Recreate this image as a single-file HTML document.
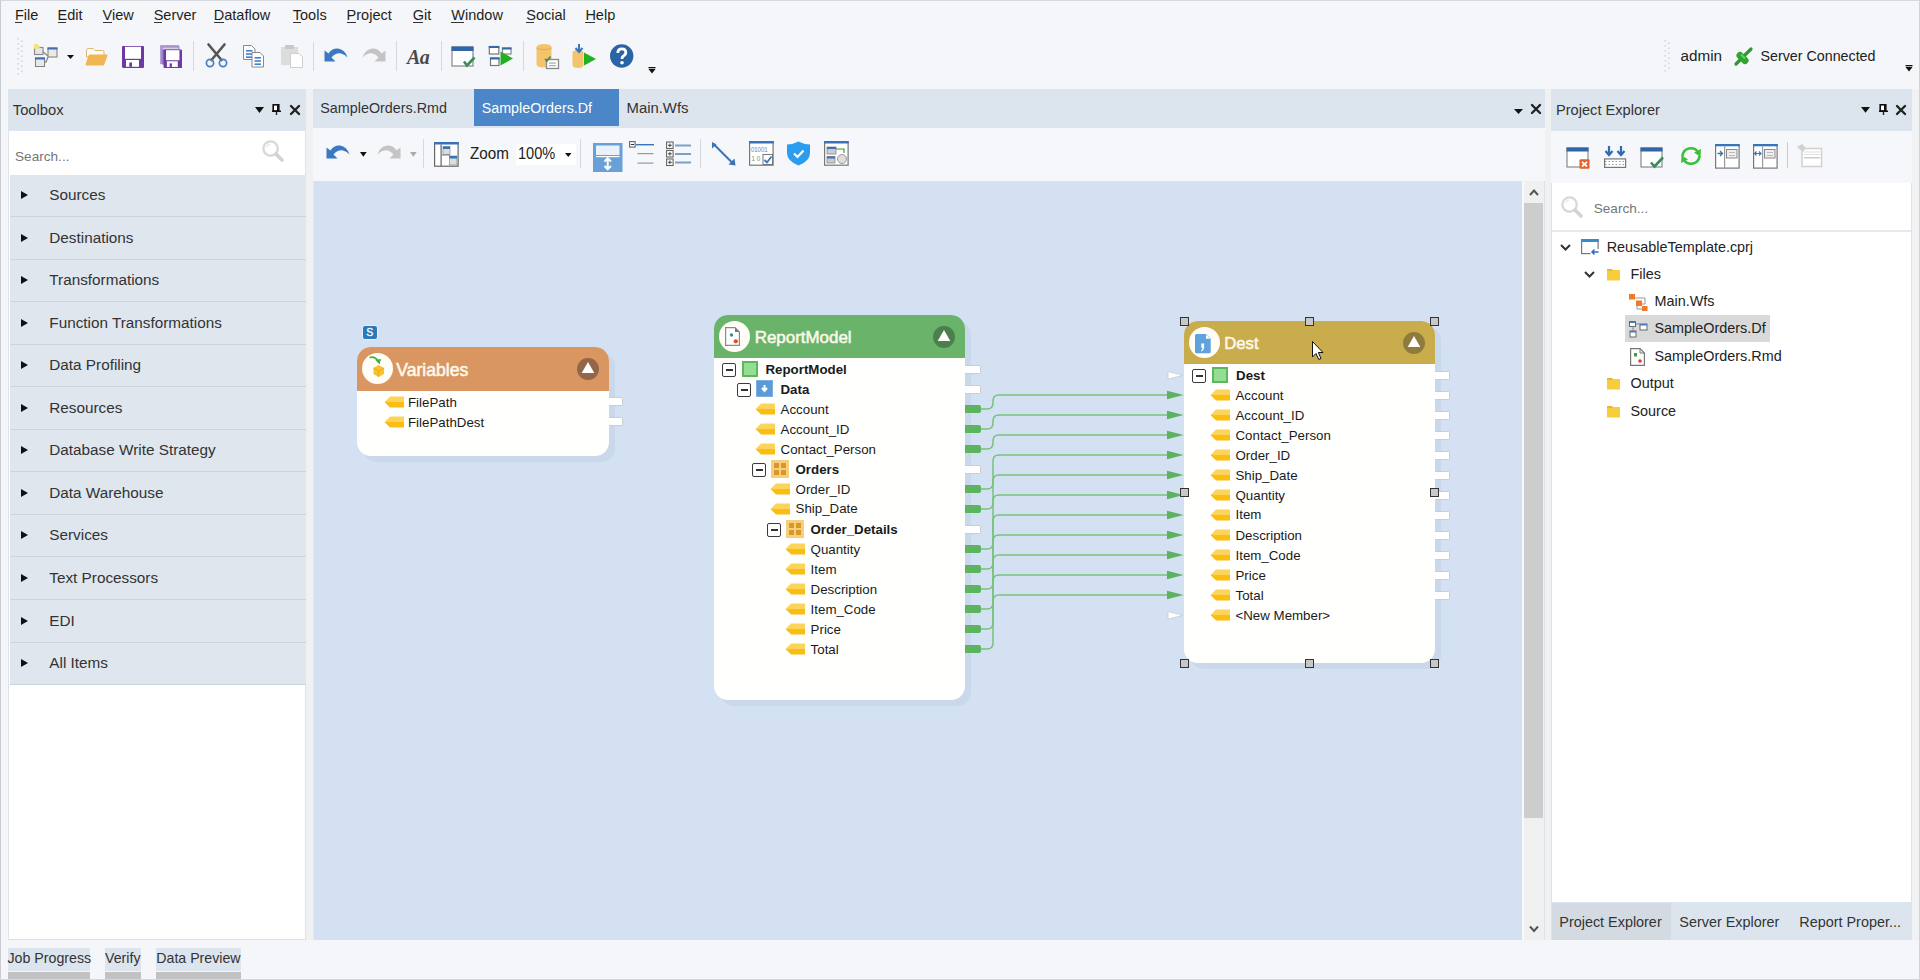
<!DOCTYPE html><html><head><meta charset="utf-8"><style>
*{margin:0;padding:0;box-sizing:border-box}
html,body{width:1920px;height:980px;overflow:hidden;background:#f4f6f9;font-family:"Liberation Sans",sans-serif;color:#222;position:relative}
.a{position:absolute}
.t{position:absolute;white-space:pre;line-height:1}
.hdr{background:#dce5ee}
svg{position:absolute;overflow:visible}
</style></head><body>
<div class="a" style="left:0;top:0;width:1px;height:980px;background:#c9cdd2"></div>
<div class="a" style="left:0;top:0;width:1920px;height:1px;background:#d5d8dc"></div>
<span class="t" style="left:15.00px;top:7.68px;font-size:14.50px;color:#1e1e1e;">File</span>
<div class="a" style="left:15.0px;top:21.5px;width:7px;height:1px;background:#333"></div>
<span class="t" style="left:57.50px;top:7.68px;font-size:14.50px;color:#1e1e1e;">Edit</span>
<div class="a" style="left:57.5px;top:21.5px;width:8px;height:1px;background:#333"></div>
<span class="t" style="left:102.50px;top:7.68px;font-size:14.50px;color:#1e1e1e;">View</span>
<div class="a" style="left:102.5px;top:21.5px;width:9px;height:1px;background:#333"></div>
<span class="t" style="left:153.70px;top:7.68px;font-size:14.50px;color:#1e1e1e;">Server</span>
<div class="a" style="left:153.7px;top:21.5px;width:8px;height:1px;background:#333"></div>
<span class="t" style="left:213.80px;top:7.68px;font-size:14.50px;color:#1e1e1e;">Dataflow</span>
<div class="a" style="left:213.8px;top:21.5px;width:10px;height:1px;background:#333"></div>
<span class="t" style="left:292.80px;top:7.68px;font-size:14.50px;color:#1e1e1e;">Tools</span>
<div class="a" style="left:292.8px;top:21.5px;width:8px;height:1px;background:#333"></div>
<span class="t" style="left:346.60px;top:7.68px;font-size:14.50px;color:#1e1e1e;">Project</span>
<div class="a" style="left:346.6px;top:21.5px;width:9px;height:1px;background:#333"></div>
<span class="t" style="left:412.80px;top:7.68px;font-size:14.50px;color:#1e1e1e;">Git</span>
<div class="a" style="left:412.8px;top:21.5px;width:10px;height:1px;background:#333"></div>
<span class="t" style="left:451.30px;top:7.68px;font-size:14.50px;color:#1e1e1e;">Window</span>
<div class="a" style="left:451.3px;top:21.5px;width:13px;height:1px;background:#333"></div>
<span class="t" style="left:526.30px;top:7.68px;font-size:14.50px;color:#1e1e1e;">Social</span>
<div class="a" style="left:526.3px;top:21.5px;width:8px;height:1px;background:#333"></div>
<span class="t" style="left:585.40px;top:7.68px;font-size:14.50px;color:#1e1e1e;">Help</span>
<div class="a" style="left:585.4px;top:21.5px;width:10px;height:1px;background:#333"></div>
<div class="a hdr" style="left:8px;top:89px;width:298px;height:42px"></div>
<span class="t" style="left:12.80px;top:103.07px;font-size:14.74px;color:#333;">Toolbox</span>
<div class="a" style="left:8px;top:131px;width:298px;height:809px;background:#fff;border-left:1px solid #dfe2e6;border-right:1px solid #dfe2e6;border-bottom:1px solid #dcdfe3"></div>
<div class="a" style="left:306px;top:89px;width:7px;height:851px;background:#eff1f3"></div>
<span class="t" style="left:15.00px;top:149.72px;font-size:13.62px;color:#767676;">Search...</span>
<div class="a" style="left:10px;top:174.50px;width:296px;height:42.55px;background:#dfe6ee;border-bottom:1px solid #cbd3dc"></div>
<div class="a" style="left:21px;top:191.00px;width:0;height:0;border-left:7px solid #111;border-top:4.3px solid transparent;border-bottom:4.3px solid transparent"></div>
<span class="t" style="left:49.30px;top:187.00px;font-size:15.30px;color:#333;">Sources</span>
<div class="a" style="left:10px;top:217.05px;width:296px;height:42.55px;background:#dfe6ee;border-bottom:1px solid #cbd3dc"></div>
<div class="a" style="left:21px;top:233.55px;width:0;height:0;border-left:7px solid #111;border-top:4.3px solid transparent;border-bottom:4.3px solid transparent"></div>
<span class="t" style="left:49.30px;top:229.55px;font-size:15.30px;color:#333;">Destinations</span>
<div class="a" style="left:10px;top:259.60px;width:296px;height:42.55px;background:#dfe6ee;border-bottom:1px solid #cbd3dc"></div>
<div class="a" style="left:21px;top:276.10px;width:0;height:0;border-left:7px solid #111;border-top:4.3px solid transparent;border-bottom:4.3px solid transparent"></div>
<span class="t" style="left:49.30px;top:272.10px;font-size:15.30px;color:#333;">Transformations</span>
<div class="a" style="left:10px;top:302.15px;width:296px;height:42.55px;background:#dfe6ee;border-bottom:1px solid #cbd3dc"></div>
<div class="a" style="left:21px;top:318.65px;width:0;height:0;border-left:7px solid #111;border-top:4.3px solid transparent;border-bottom:4.3px solid transparent"></div>
<span class="t" style="left:49.30px;top:314.64px;font-size:15.30px;color:#333;">Function Transformations</span>
<div class="a" style="left:10px;top:344.70px;width:296px;height:42.55px;background:#dfe6ee;border-bottom:1px solid #cbd3dc"></div>
<div class="a" style="left:21px;top:361.20px;width:0;height:0;border-left:7px solid #111;border-top:4.3px solid transparent;border-bottom:4.3px solid transparent"></div>
<span class="t" style="left:49.30px;top:357.19px;font-size:15.30px;color:#333;">Data Profiling</span>
<div class="a" style="left:10px;top:387.25px;width:296px;height:42.55px;background:#dfe6ee;border-bottom:1px solid #cbd3dc"></div>
<div class="a" style="left:21px;top:403.75px;width:0;height:0;border-left:7px solid #111;border-top:4.3px solid transparent;border-bottom:4.3px solid transparent"></div>
<span class="t" style="left:49.30px;top:399.75px;font-size:15.30px;color:#333;">Resources</span>
<div class="a" style="left:10px;top:429.80px;width:296px;height:42.55px;background:#dfe6ee;border-bottom:1px solid #cbd3dc"></div>
<div class="a" style="left:21px;top:446.30px;width:0;height:0;border-left:7px solid #111;border-top:4.3px solid transparent;border-bottom:4.3px solid transparent"></div>
<span class="t" style="left:49.30px;top:442.29px;font-size:15.30px;color:#333;">Database Write Strategy</span>
<div class="a" style="left:10px;top:472.35px;width:296px;height:42.55px;background:#dfe6ee;border-bottom:1px solid #cbd3dc"></div>
<div class="a" style="left:21px;top:488.85px;width:0;height:0;border-left:7px solid #111;border-top:4.3px solid transparent;border-bottom:4.3px solid transparent"></div>
<span class="t" style="left:49.30px;top:484.84px;font-size:15.30px;color:#333;">Data Warehouse</span>
<div class="a" style="left:10px;top:514.90px;width:296px;height:42.55px;background:#dfe6ee;border-bottom:1px solid #cbd3dc"></div>
<div class="a" style="left:21px;top:531.40px;width:0;height:0;border-left:7px solid #111;border-top:4.3px solid transparent;border-bottom:4.3px solid transparent"></div>
<span class="t" style="left:49.30px;top:527.39px;font-size:15.30px;color:#333;">Services</span>
<div class="a" style="left:10px;top:557.45px;width:296px;height:42.55px;background:#dfe6ee;border-bottom:1px solid #cbd3dc"></div>
<div class="a" style="left:21px;top:573.95px;width:0;height:0;border-left:7px solid #111;border-top:4.3px solid transparent;border-bottom:4.3px solid transparent"></div>
<span class="t" style="left:49.30px;top:569.95px;font-size:15.30px;color:#333;">Text Processors</span>
<div class="a" style="left:10px;top:600.00px;width:296px;height:42.55px;background:#dfe6ee;border-bottom:1px solid #cbd3dc"></div>
<div class="a" style="left:21px;top:616.50px;width:0;height:0;border-left:7px solid #111;border-top:4.3px solid transparent;border-bottom:4.3px solid transparent"></div>
<span class="t" style="left:49.30px;top:612.50px;font-size:15.30px;color:#333;">EDI</span>
<div class="a" style="left:10px;top:642.55px;width:296px;height:42.55px;background:#dfe6ee;border-bottom:1px solid #cbd3dc"></div>
<div class="a" style="left:21px;top:659.05px;width:0;height:0;border-left:7px solid #111;border-top:4.3px solid transparent;border-bottom:4.3px solid transparent"></div>
<span class="t" style="left:49.30px;top:655.04px;font-size:15.30px;color:#333;">All Items</span>
<div class="a hdr" style="left:313px;top:89px;width:1232px;height:39px"></div>
<div class="a" style="left:313px;top:128px;width:1232px;height:53px;background:#f5f7fa"></div>
<div class="a" style="left:313px;top:181px;width:1209px;height:759px;background:#d3e1f2;border-left:1px solid #e3e8ee"></div>
<div class="a" style="left:1545px;top:89px;width:6px;height:851px;background:#eff1f3"></div>
<div class="a" style="left:1522px;top:181px;width:23px;height:759px;background:#f0f0f0;border-left:2px solid #f7f9fb;border-right:1px solid #dfe2e5"></div>
<div class="a" style="left:1524px;top:203px;width:18.5px;height:615px;background:#cdcdcd"></div>
<span class="t" style="left:320.30px;top:101.31px;font-size:14.34px;color:#333;">SampleOrders.Rmd</span>
<div class="a" style="left:474px;top:89px;width:145px;height:37px;background:#4b86c8"></div>
<span class="t" style="left:481.75px;top:101.35px;font-size:14.29px;color:#fff;">SampleOrders.Df</span>
<span class="t" style="left:626.50px;top:100.85px;font-size:14.88px;color:#333;">Main.Wfs</span>
<div class="a" style="left:516px;top:144px;width:60px;height:21px;background:#fff"></div>
<span class="t" style="left:470.00px;top:145.68px;font-size:15.20px;color:#222;transform:scaleY(1.1);transform-origin:0 85%;">Zoom</span>
<span class="t" style="left:518.00px;top:146.89px;font-size:14.60px;color:#222;transform:scaleY(1.08);transform-origin:0 85%;">100%</span>
<div class="a hdr" style="left:1551px;top:89px;width:361px;height:42px"></div>
<span class="t" style="left:1556.00px;top:102.57px;font-size:14.62px;color:#333;">Project Explorer</span>
<div class="a" style="left:1551px;top:131px;width:361px;height:52px;background:#f5f7fa"></div>
<div class="a" style="left:1552px;top:183px;width:360px;height:48px;background:#fff"></div>
<div class="a" style="left:1552px;top:230px;width:360px;height:2px;background:#e6e8eb"></div>
<span class="t" style="left:1593.70px;top:202.12px;font-size:13.62px;color:#767676;">Search...</span>
<div class="a" style="left:1551px;top:232px;width:361px;height:670px;background:#fff;border-left:1px solid #dfe2e6;border-right:1px solid #dfe2e6"></div>
<div class="a" style="left:1551px;top:183px;width:1px;height:50px;background:#dfe2e6"></div><div class="a" style="left:1911px;top:183px;width:1px;height:50px;background:#dfe2e6"></div>
<div class="a" style="left:1912px;top:89px;width:7px;height:851px;background:#f0f2f4"></div>
<div class="a hdr" style="left:1551px;top:902px;width:361px;height:38px"></div>
<div class="a" style="left:1552px;top:903px;width:119px;height:37px;background:#d3dae1"></div>
<span class="t" style="left:1559.30px;top:914.76px;font-size:14.40px;color:#333;">Project Explorer</span>
<span class="t" style="left:1679.30px;top:914.76px;font-size:14.40px;color:#333;">Server Explorer</span>
<span class="t" style="left:1799.30px;top:914.76px;font-size:14.40px;color:#333;">Report Proper...</span>
<div class="a" style="left:1625px;top:315px;width:145px;height:27px;background:#d9d9d9"></div>
<span class="t" style="left:1606.70px;top:239.86px;font-size:14.40px;color:#222;">ReusableTemplate.cprj</span>
<span class="t" style="left:1630.50px;top:266.56px;font-size:14.40px;color:#222;">Files</span>
<span class="t" style="left:1654.50px;top:293.76px;font-size:14.40px;color:#222;">Main.Wfs</span>
<span class="t" style="left:1654.50px;top:321.16px;font-size:14.40px;color:#222;">SampleOrders.Df</span>
<span class="t" style="left:1654.50px;top:349.16px;font-size:14.40px;color:#222;">SampleOrders.Rmd</span>
<span class="t" style="left:1630.50px;top:376.06px;font-size:14.40px;color:#222;">Output</span>
<span class="t" style="left:1630.50px;top:404.16px;font-size:14.40px;color:#222;">Source</span>
<span class="t" style="left:1680.50px;top:48.35px;font-size:15.24px;color:#222;">admin</span>
<span class="t" style="left:1760.50px;top:49.17px;font-size:14.27px;color:#222;">Server Connected</span>
<div class="a hdr" style="left:7.5px;top:948px;width:82.0px;height:23.3px"></div>
<div class="a" style="left:7.5px;top:972px;width:82.0px;height:6.5px;background:#c2c2c2"></div>
<span class="t" style="left:7.50px;top:950.93px;font-size:14.20px;color:#333;">Job Progress</span>
<div class="a hdr" style="left:105.0px;top:948px;width:36.2px;height:23.3px"></div>
<div class="a" style="left:105.0px;top:972px;width:36.2px;height:6.5px;background:#c2c2c2"></div>
<span class="t" style="left:105.00px;top:950.93px;font-size:14.20px;color:#333;">Verify</span>
<div class="a hdr" style="left:156.2px;top:948px;width:85.0px;height:23.3px"></div>
<div class="a" style="left:156.2px;top:972px;width:85.0px;height:6.5px;background:#c2c2c2"></div>
<span class="t" style="left:156.25px;top:950.93px;font-size:14.20px;color:#333;">Data Preview</span>
<div class="a" style="left:0;top:979px;width:1920px;height:1px;background:#d3d6da"></div>
<svg style="left:0;top:0" width="1920" height="980"><path d="M981,409 H987 Q993,409 993,403 V401 Q993,395 999,395 H1170" stroke="#78c27a" stroke-width="1.5" fill="none"/><path d="M981,429 H987 Q993,429 993,423 V421 Q993,415 999,415 H1170" stroke="#78c27a" stroke-width="1.5" fill="none"/><path d="M981,449 H987 Q993,449 993,443 V441 Q993,435 999,435 H1170" stroke="#78c27a" stroke-width="1.5" fill="none"/><path d="M981,489 H987 Q993,489 993,483 V461 Q993,455 999,455 H1170" stroke="#78c27a" stroke-width="1.5" fill="none"/><path d="M981,509 H987 Q993,509 993,503 V481 Q993,475 999,475 H1170" stroke="#78c27a" stroke-width="1.5" fill="none"/><path d="M981,549 H987 Q993,549 993,543 V501 Q993,495 999,495 H1170" stroke="#78c27a" stroke-width="1.5" fill="none"/><path d="M981,569 H987 Q993,569 993,563 V521 Q993,515 999,515 H1170" stroke="#78c27a" stroke-width="1.5" fill="none"/><path d="M981,589 H987 Q993,589 993,583 V541 Q993,535 999,535 H1170" stroke="#78c27a" stroke-width="1.5" fill="none"/><path d="M981,609 H987 Q993,609 993,603 V561 Q993,555 999,555 H1170" stroke="#78c27a" stroke-width="1.5" fill="none"/><path d="M981,629 H987 Q993,629 993,623 V581 Q993,575 999,575 H1170" stroke="#78c27a" stroke-width="1.5" fill="none"/><path d="M981,649 H987 Q993,649 993,643 V601 Q993,595 999,595 H1170" stroke="#78c27a" stroke-width="1.5" fill="none"/><path d="M1167,390.7 L1183.5,395 L1167,399.3 Z" fill="#5cb25e"/><path d="M1167,410.7 L1183.5,415 L1167,419.3 Z" fill="#5cb25e"/><path d="M1167,430.7 L1183.5,435 L1167,439.3 Z" fill="#5cb25e"/><path d="M1167,450.7 L1183.5,455 L1167,459.3 Z" fill="#5cb25e"/><path d="M1167,470.7 L1183.5,475 L1167,479.3 Z" fill="#5cb25e"/><path d="M1167,490.7 L1183.5,495 L1167,499.3 Z" fill="#5cb25e"/><path d="M1167,510.7 L1183.5,515 L1167,519.3 Z" fill="#5cb25e"/><path d="M1167,530.7 L1183.5,535 L1167,539.3 Z" fill="#5cb25e"/><path d="M1167,550.7 L1183.5,555 L1167,559.3 Z" fill="#5cb25e"/><path d="M1167,570.7 L1183.5,575 L1167,579.3 Z" fill="#5cb25e"/><path d="M1167,590.7 L1183.5,595 L1167,599.3 Z" fill="#5cb25e"/><path d="M1168,371.5 L1183,375.3 L1168,379.1 Z" fill="#fff" stroke="#c8ccd0" stroke-width="0.8"/><path d="M1168,611.5 L1183,615.3 L1168,619.0999999999999 Z" fill="#fff" stroke="#c8ccd0" stroke-width="0.8"/></svg>
<div class="a" style="left:362px;top:325px;width:16px;height:15px;border-radius:3px;background:#2b79b9;border:1px solid #e8f0f8"></div>
<span class="t" style="left:366.30px;top:328.08px;font-size:10.49px;color:#fff;-webkit-text-stroke:0.3px #fff;">S</span>
<div class="a" style="left:363px;top:353px;width:251.5px;height:109px;border-radius:14px;background:#c9d8ea"></div>
<div class="a" style="left:357px;top:347px;width:251.5px;height:109px;border-radius:14px;background:#fffffd;overflow:hidden"><div class="a" style="left:0;top:0;width:251.5px;height:43.5px;background:#da9660"></div></div>
<div class="a" style="left:362.0px;top:353.25px;width:31px;height:31px;border-radius:50%;background:#fffdf6"></div>
<svg style="left:576.5px;top:357.75px" width="22" height="22"><circle cx="11" cy="11" r="11" fill="#93664a"/><path d="M11,4 L17.3,15 H4.7 Z" fill="#fff"/></svg>
<span class="t" style="left:396.30px;top:361.85px;font-size:17.58px;color:#fdf8ea;-webkit-text-stroke:0.55px #fdf8ea;">Variables</span>
<svg style="left:383.6px;top:395.5px" width="20" height="12" viewBox="0 0 20 12"><path d="M0.5,6 L6,0.5 H20 V6 Z" fill="#fdd45a"/><path d="M0.5,6 L6,11.5 H20 V6 Z" fill="#fbbd12"/></svg>
<span class="t" style="left:408.00px;top:395.69px;font-size:13.30px;color:#1a1a1a;">FilePath</span>
<div class="a" style="left:609px;top:396.5px;width:14px;height:9px;background:#fff;border:1px solid #c9ced3;border-left:none;border-radius:0 2px 2px 0"></div>
<svg style="left:383.6px;top:415.5px" width="20" height="12" viewBox="0 0 20 12"><path d="M0.5,6 L6,0.5 H20 V6 Z" fill="#fdd45a"/><path d="M0.5,6 L6,11.5 H20 V6 Z" fill="#fbbd12"/></svg>
<span class="t" style="left:408.00px;top:415.69px;font-size:13.30px;color:#1a1a1a;">FilePathDest</span>
<div class="a" style="left:609px;top:416.5px;width:14px;height:9px;background:#fff;border:1px solid #c9ced3;border-left:none;border-radius:0 2px 2px 0"></div>
<div class="a" style="left:720px;top:321px;width:251px;height:385px;border-radius:14px;background:#c9d8ea"></div>
<div class="a" style="left:714px;top:315px;width:251px;height:385px;border-radius:14px;background:#fffffd;overflow:hidden"><div class="a" style="left:0;top:0;width:251px;height:43.19999999999999px;background:#69b36b"></div></div>
<div class="a" style="left:719.0px;top:321.1px;width:31px;height:31px;border-radius:50%;background:#fffdf6"></div>
<svg style="left:933px;top:325.6px" width="22" height="22"><circle cx="11" cy="11" r="11" fill="#4b804c"/><path d="M11,4 L17.3,15 H4.7 Z" fill="#fff"/></svg>
<span class="t" style="left:754.70px;top:329.81px;font-size:16.93px;color:#fdf8ea;-webkit-text-stroke:0.55px #fdf8ea;">ReportModel</span>
<div class="a" style="left:722px;top:362.8px;width:14px;height:14px;border:1.6px solid #3a3a3a;border-radius:2px;background:#fff"></div><div class="a" style="left:725.5px;top:369.0px;width:7px;height:1.6px;background:#333"></div>
<div class="a" style="left:741.5px;top:360.8px;width:16px;height:16px;background:#95dc95;border:2.5px solid #5cb85c"></div>
<span class="t" style="left:765.50px;top:362.50px;font-size:13.30px;color:#1a1a1a;font-weight:700;">ReportModel</span>
<div class="a" style="left:965px;top:364.7px;width:16px;height:9px;background:#fff;border:1px solid #c9ced3;border-left:none;border-radius:0 2px 2px 0"></div>
<div class="a" style="left:737px;top:382.8px;width:14px;height:14px;border:1.6px solid #3a3a3a;border-radius:2px;background:#fff"></div><div class="a" style="left:740.5px;top:389.0px;width:7px;height:1.6px;background:#333"></div>
<div class="a" style="left:756px;top:380.3px;width:17px;height:17px;background:#5b9ad8;border:1.5px solid #7fb0e0"></div><svg style="left:756px;top:380.3px" width="17" height="17"><path d="M8.5,5 V10 M6,8 L8.5,11 L11,8" stroke="#fff" stroke-width="2" fill="none"/></svg>
<span class="t" style="left:780.50px;top:382.50px;font-size:13.30px;color:#1a1a1a;font-weight:700;">Data</span>
<div class="a" style="left:965px;top:384.7px;width:16px;height:9px;background:#fff;border:1px solid #c9ced3;border-left:none;border-radius:0 2px 2px 0"></div>
<svg style="left:755.3px;top:403.3px" width="20" height="12" viewBox="0 0 20 12"><path d="M0.5,6 L6,0.5 H20 V6 Z" fill="#fdd45a"/><path d="M0.5,6 L6,11.5 H20 V6 Z" fill="#fbbd12"/></svg>
<span class="t" style="left:780.60px;top:402.50px;font-size:13.30px;color:#1a1a1a;">Account</span>
<div class="a" style="left:965px;top:404.9px;width:16px;height:8.6px;background:#5db45e;border-radius:0 2px 2px 0"></div>
<svg style="left:755.3px;top:423.3px" width="20" height="12" viewBox="0 0 20 12"><path d="M0.5,6 L6,0.5 H20 V6 Z" fill="#fdd45a"/><path d="M0.5,6 L6,11.5 H20 V6 Z" fill="#fbbd12"/></svg>
<span class="t" style="left:780.60px;top:422.50px;font-size:13.30px;color:#1a1a1a;">Account_ID</span>
<div class="a" style="left:965px;top:424.9px;width:16px;height:8.6px;background:#5db45e;border-radius:0 2px 2px 0"></div>
<svg style="left:755.3px;top:443.3px" width="20" height="12" viewBox="0 0 20 12"><path d="M0.5,6 L6,0.5 H20 V6 Z" fill="#fdd45a"/><path d="M0.5,6 L6,11.5 H20 V6 Z" fill="#fbbd12"/></svg>
<span class="t" style="left:780.60px;top:442.50px;font-size:13.30px;color:#1a1a1a;">Contact_Person</span>
<div class="a" style="left:965px;top:444.9px;width:16px;height:8.6px;background:#5db45e;border-radius:0 2px 2px 0"></div>
<div class="a" style="left:752px;top:462.8px;width:14px;height:14px;border:1.6px solid #3a3a3a;border-radius:2px;background:#fff"></div><div class="a" style="left:755.5px;top:469.0px;width:7px;height:1.6px;background:#333"></div>
<div class="a" style="left:771px;top:459.8px;width:18px;height:18px;background:#f6cf7a"></div><div class="a" style="left:774px;top:462.8px;width:5px;height:5px;background:#d9962a"></div><div class="a" style="left:781px;top:462.8px;width:5px;height:5px;background:#d9962a"></div><div class="a" style="left:774px;top:469.8px;width:5px;height:5px;background:#d9962a"></div><div class="a" style="left:781px;top:469.8px;width:5px;height:5px;background:#d9962a"></div>
<span class="t" style="left:795.50px;top:462.50px;font-size:13.30px;color:#1a1a1a;font-weight:700;">Orders</span>
<div class="a" style="left:965px;top:464.7px;width:16px;height:9px;background:#fff;border:1px solid #c9ced3;border-left:none;border-radius:0 2px 2px 0"></div>
<svg style="left:770.3px;top:483.3px" width="20" height="12" viewBox="0 0 20 12"><path d="M0.5,6 L6,0.5 H20 V6 Z" fill="#fdd45a"/><path d="M0.5,6 L6,11.5 H20 V6 Z" fill="#fbbd12"/></svg>
<span class="t" style="left:795.60px;top:482.50px;font-size:13.30px;color:#1a1a1a;">Order_ID</span>
<div class="a" style="left:965px;top:484.9px;width:16px;height:8.6px;background:#5db45e;border-radius:0 2px 2px 0"></div>
<svg style="left:770.3px;top:503.29999999999995px" width="20" height="12" viewBox="0 0 20 12"><path d="M0.5,6 L6,0.5 H20 V6 Z" fill="#fdd45a"/><path d="M0.5,6 L6,11.5 H20 V6 Z" fill="#fbbd12"/></svg>
<span class="t" style="left:795.60px;top:502.49px;font-size:13.30px;color:#1a1a1a;">Ship_Date</span>
<div class="a" style="left:965px;top:504.9px;width:16px;height:8.6px;background:#5db45e;border-radius:0 2px 2px 0"></div>
<div class="a" style="left:767px;top:522.8px;width:14px;height:14px;border:1.6px solid #3a3a3a;border-radius:2px;background:#fff"></div><div class="a" style="left:770.5px;top:529.0px;width:7px;height:1.6px;background:#333"></div>
<div class="a" style="left:786px;top:519.8px;width:18px;height:18px;background:#f6cf7a"></div><div class="a" style="left:789px;top:522.8px;width:5px;height:5px;background:#d9962a"></div><div class="a" style="left:796px;top:522.8px;width:5px;height:5px;background:#d9962a"></div><div class="a" style="left:789px;top:529.8px;width:5px;height:5px;background:#d9962a"></div><div class="a" style="left:796px;top:529.8px;width:5px;height:5px;background:#d9962a"></div>
<span class="t" style="left:810.50px;top:522.50px;font-size:13.30px;color:#1a1a1a;font-weight:700;">Order_Details</span>
<div class="a" style="left:965px;top:524.7px;width:16px;height:9px;background:#fff;border:1px solid #c9ced3;border-left:none;border-radius:0 2px 2px 0"></div>
<svg style="left:785.3px;top:543.3px" width="20" height="12" viewBox="0 0 20 12"><path d="M0.5,6 L6,0.5 H20 V6 Z" fill="#fdd45a"/><path d="M0.5,6 L6,11.5 H20 V6 Z" fill="#fbbd12"/></svg>
<span class="t" style="left:810.60px;top:542.50px;font-size:13.30px;color:#1a1a1a;">Quantity</span>
<div class="a" style="left:965px;top:544.9px;width:16px;height:8.6px;background:#5db45e;border-radius:0 2px 2px 0"></div>
<svg style="left:785.3px;top:563.3px" width="20" height="12" viewBox="0 0 20 12"><path d="M0.5,6 L6,0.5 H20 V6 Z" fill="#fdd45a"/><path d="M0.5,6 L6,11.5 H20 V6 Z" fill="#fbbd12"/></svg>
<span class="t" style="left:810.60px;top:562.50px;font-size:13.30px;color:#1a1a1a;">Item</span>
<div class="a" style="left:965px;top:564.9px;width:16px;height:8.6px;background:#5db45e;border-radius:0 2px 2px 0"></div>
<svg style="left:785.3px;top:583.3px" width="20" height="12" viewBox="0 0 20 12"><path d="M0.5,6 L6,0.5 H20 V6 Z" fill="#fdd45a"/><path d="M0.5,6 L6,11.5 H20 V6 Z" fill="#fbbd12"/></svg>
<span class="t" style="left:810.60px;top:582.50px;font-size:13.30px;color:#1a1a1a;">Description</span>
<div class="a" style="left:965px;top:584.9px;width:16px;height:8.6px;background:#5db45e;border-radius:0 2px 2px 0"></div>
<svg style="left:785.3px;top:603.3px" width="20" height="12" viewBox="0 0 20 12"><path d="M0.5,6 L6,0.5 H20 V6 Z" fill="#fdd45a"/><path d="M0.5,6 L6,11.5 H20 V6 Z" fill="#fbbd12"/></svg>
<span class="t" style="left:810.60px;top:602.50px;font-size:13.30px;color:#1a1a1a;">Item_Code</span>
<div class="a" style="left:965px;top:604.9px;width:16px;height:8.6px;background:#5db45e;border-radius:0 2px 2px 0"></div>
<svg style="left:785.3px;top:623.3px" width="20" height="12" viewBox="0 0 20 12"><path d="M0.5,6 L6,0.5 H20 V6 Z" fill="#fdd45a"/><path d="M0.5,6 L6,11.5 H20 V6 Z" fill="#fbbd12"/></svg>
<span class="t" style="left:810.60px;top:622.50px;font-size:13.30px;color:#1a1a1a;">Price</span>
<div class="a" style="left:965px;top:624.9px;width:16px;height:8.6px;background:#5db45e;border-radius:0 2px 2px 0"></div>
<svg style="left:785.3px;top:643.3px" width="20" height="12" viewBox="0 0 20 12"><path d="M0.5,6 L6,0.5 H20 V6 Z" fill="#fdd45a"/><path d="M0.5,6 L6,11.5 H20 V6 Z" fill="#fbbd12"/></svg>
<span class="t" style="left:810.60px;top:642.50px;font-size:13.30px;color:#1a1a1a;">Total</span>
<div class="a" style="left:965px;top:644.9px;width:16px;height:8.6px;background:#5db45e;border-radius:0 2px 2px 0"></div>
<div class="a" style="left:1190px;top:327px;width:251px;height:342.4px;border-radius:14px;background:#c9d8ea"></div>
<div class="a" style="left:1184px;top:321px;width:251px;height:342.4px;border-radius:14px;background:#fffffd;overflow:hidden"><div class="a" style="left:0;top:0;width:251px;height:43.30000000000001px;background:#c9ac4c"></div></div>
<div class="a" style="left:1189.0px;top:327.15px;width:31px;height:31px;border-radius:50%;background:#fffdf6"></div>
<svg style="left:1403px;top:331.65px" width="22" height="22"><circle cx="11" cy="11" r="11" fill="#8f7c3c"/><path d="M11,4 L17.3,15 H4.7 Z" fill="#fff"/></svg>
<span class="t" style="left:1224.30px;top:336.22px;font-size:16.68px;color:#fdf8ea;-webkit-text-stroke:0.55px #fdf8ea;">Dest</span>
<div class="a" style="left:1192.2px;top:368.8px;width:14px;height:14px;border:1.6px solid #3a3a3a;border-radius:2px;background:#fff"></div><div class="a" style="left:1195.7px;top:375.0px;width:7px;height:1.6px;background:#333"></div>
<div class="a" style="left:1212px;top:366.8px;width:16px;height:16px;background:#95dc95;border:2.5px solid #5cb85c"></div>
<span class="t" style="left:1236.10px;top:368.50px;font-size:13.30px;color:#1a1a1a;font-weight:700;">Dest</span>
<div class="a" style="left:1435px;top:370.8px;width:15px;height:9px;background:#fff;border:1px solid #c9ced3;border-left:none;border-radius:0 2px 2px 0"></div>
<svg style="left:1210.2px;top:389.3px" width="20" height="12" viewBox="0 0 20 12"><path d="M0.5,6 L6,0.5 H20 V6 Z" fill="#fdd45a"/><path d="M0.5,6 L6,11.5 H20 V6 Z" fill="#fbbd12"/></svg>
<span class="t" style="left:1235.50px;top:388.50px;font-size:13.30px;color:#1a1a1a;">Account</span>
<div class="a" style="left:1435px;top:390.8px;width:15px;height:9px;background:#fff;border:1px solid #c9ced3;border-left:none;border-radius:0 2px 2px 0"></div>
<svg style="left:1210.2px;top:409.3px" width="20" height="12" viewBox="0 0 20 12"><path d="M0.5,6 L6,0.5 H20 V6 Z" fill="#fdd45a"/><path d="M0.5,6 L6,11.5 H20 V6 Z" fill="#fbbd12"/></svg>
<span class="t" style="left:1235.50px;top:408.50px;font-size:13.30px;color:#1a1a1a;">Account_ID</span>
<div class="a" style="left:1435px;top:410.8px;width:15px;height:9px;background:#fff;border:1px solid #c9ced3;border-left:none;border-radius:0 2px 2px 0"></div>
<svg style="left:1210.2px;top:429.3px" width="20" height="12" viewBox="0 0 20 12"><path d="M0.5,6 L6,0.5 H20 V6 Z" fill="#fdd45a"/><path d="M0.5,6 L6,11.5 H20 V6 Z" fill="#fbbd12"/></svg>
<span class="t" style="left:1235.50px;top:428.50px;font-size:13.30px;color:#1a1a1a;">Contact_Person</span>
<div class="a" style="left:1435px;top:430.8px;width:15px;height:9px;background:#fff;border:1px solid #c9ced3;border-left:none;border-radius:0 2px 2px 0"></div>
<svg style="left:1210.2px;top:449.3px" width="20" height="12" viewBox="0 0 20 12"><path d="M0.5,6 L6,0.5 H20 V6 Z" fill="#fdd45a"/><path d="M0.5,6 L6,11.5 H20 V6 Z" fill="#fbbd12"/></svg>
<span class="t" style="left:1235.50px;top:448.50px;font-size:13.30px;color:#1a1a1a;">Order_ID</span>
<div class="a" style="left:1435px;top:450.8px;width:15px;height:9px;background:#fff;border:1px solid #c9ced3;border-left:none;border-radius:0 2px 2px 0"></div>
<svg style="left:1210.2px;top:469.3px" width="20" height="12" viewBox="0 0 20 12"><path d="M0.5,6 L6,0.5 H20 V6 Z" fill="#fdd45a"/><path d="M0.5,6 L6,11.5 H20 V6 Z" fill="#fbbd12"/></svg>
<span class="t" style="left:1235.50px;top:468.50px;font-size:13.30px;color:#1a1a1a;">Ship_Date</span>
<div class="a" style="left:1435px;top:470.8px;width:15px;height:9px;background:#fff;border:1px solid #c9ced3;border-left:none;border-radius:0 2px 2px 0"></div>
<svg style="left:1210.2px;top:489.3px" width="20" height="12" viewBox="0 0 20 12"><path d="M0.5,6 L6,0.5 H20 V6 Z" fill="#fdd45a"/><path d="M0.5,6 L6,11.5 H20 V6 Z" fill="#fbbd12"/></svg>
<span class="t" style="left:1235.50px;top:488.50px;font-size:13.30px;color:#1a1a1a;">Quantity</span>
<div class="a" style="left:1435px;top:490.8px;width:15px;height:9px;background:#fff;border:1px solid #c9ced3;border-left:none;border-radius:0 2px 2px 0"></div>
<svg style="left:1210.2px;top:509.29999999999995px" width="20" height="12" viewBox="0 0 20 12"><path d="M0.5,6 L6,0.5 H20 V6 Z" fill="#fdd45a"/><path d="M0.5,6 L6,11.5 H20 V6 Z" fill="#fbbd12"/></svg>
<span class="t" style="left:1235.50px;top:508.49px;font-size:13.30px;color:#1a1a1a;">Item</span>
<div class="a" style="left:1435px;top:510.8px;width:15px;height:9px;background:#fff;border:1px solid #c9ced3;border-left:none;border-radius:0 2px 2px 0"></div>
<svg style="left:1210.2px;top:529.3px" width="20" height="12" viewBox="0 0 20 12"><path d="M0.5,6 L6,0.5 H20 V6 Z" fill="#fdd45a"/><path d="M0.5,6 L6,11.5 H20 V6 Z" fill="#fbbd12"/></svg>
<span class="t" style="left:1235.50px;top:528.50px;font-size:13.30px;color:#1a1a1a;">Description</span>
<div class="a" style="left:1435px;top:530.8px;width:15px;height:9px;background:#fff;border:1px solid #c9ced3;border-left:none;border-radius:0 2px 2px 0"></div>
<svg style="left:1210.2px;top:549.3px" width="20" height="12" viewBox="0 0 20 12"><path d="M0.5,6 L6,0.5 H20 V6 Z" fill="#fdd45a"/><path d="M0.5,6 L6,11.5 H20 V6 Z" fill="#fbbd12"/></svg>
<span class="t" style="left:1235.50px;top:548.50px;font-size:13.30px;color:#1a1a1a;">Item_Code</span>
<div class="a" style="left:1435px;top:550.8px;width:15px;height:9px;background:#fff;border:1px solid #c9ced3;border-left:none;border-radius:0 2px 2px 0"></div>
<svg style="left:1210.2px;top:569.3px" width="20" height="12" viewBox="0 0 20 12"><path d="M0.5,6 L6,0.5 H20 V6 Z" fill="#fdd45a"/><path d="M0.5,6 L6,11.5 H20 V6 Z" fill="#fbbd12"/></svg>
<span class="t" style="left:1235.50px;top:568.50px;font-size:13.30px;color:#1a1a1a;">Price</span>
<div class="a" style="left:1435px;top:570.8px;width:15px;height:9px;background:#fff;border:1px solid #c9ced3;border-left:none;border-radius:0 2px 2px 0"></div>
<svg style="left:1210.2px;top:589.3px" width="20" height="12" viewBox="0 0 20 12"><path d="M0.5,6 L6,0.5 H20 V6 Z" fill="#fdd45a"/><path d="M0.5,6 L6,11.5 H20 V6 Z" fill="#fbbd12"/></svg>
<span class="t" style="left:1235.50px;top:588.50px;font-size:13.30px;color:#1a1a1a;">Total</span>
<div class="a" style="left:1435px;top:590.8px;width:15px;height:9px;background:#fff;border:1px solid #c9ced3;border-left:none;border-radius:0 2px 2px 0"></div>
<svg style="left:1210.2px;top:609.3px" width="20" height="12" viewBox="0 0 20 12"><path d="M0.5,6 L6,0.5 H20 V6 Z" fill="#fdd45a"/><path d="M0.5,6 L6,11.5 H20 V6 Z" fill="#fbbd12"/></svg>
<span class="t" style="left:1235.50px;top:608.50px;font-size:13.30px;color:#1a1a1a;">&lt;New Member&gt;</span>
<div class="a" style="left:1179.5px;top:317.0px;width:9px;height:9px;background:#c8c8c8;border:1.5px solid #333"></div>
<div class="a" style="left:1179.5px;top:658.5px;width:9px;height:9px;background:#c8c8c8;border:1.5px solid #333"></div>
<div class="a" style="left:1304.5px;top:317.0px;width:9px;height:9px;background:#c8c8c8;border:1.5px solid #333"></div>
<div class="a" style="left:1304.5px;top:658.5px;width:9px;height:9px;background:#c8c8c8;border:1.5px solid #333"></div>
<div class="a" style="left:1429.5px;top:317.0px;width:9px;height:9px;background:#c8c8c8;border:1.5px solid #333"></div>
<div class="a" style="left:1429.5px;top:658.5px;width:9px;height:9px;background:#c8c8c8;border:1.5px solid #333"></div>
<div class="a" style="left:1179.5px;top:488px;width:9px;height:9px;background:#c8c8c8;border:1.5px solid #333"></div>
<div class="a" style="left:1429.5px;top:488px;width:9px;height:9px;background:#c8c8c8;border:1.5px solid #333"></div>
<svg style="left:1312px;top:341px" width="14" height="20"><path d="M0.5,0.5 V16 L4,12.5 L6.8,18.5 L9,17.5 L6.3,11.5 H11 Z" fill="#fff" stroke="#111" stroke-width="1"/></svg>
<svg style="left:16px;top:38px" width="8" height="36" viewBox="0 0 8 36"><rect x="1.5" y="0" width="1.6" height="1.6" fill="#d3d6da"/><rect x="5" y="2.5" width="1.6" height="1.6" fill="#d3d6da"/><rect x="1.5" y="5.0" width="1.6" height="1.6" fill="#d3d6da"/><rect x="5" y="7.5" width="1.6" height="1.6" fill="#d3d6da"/><rect x="1.5" y="10.0" width="1.6" height="1.6" fill="#d3d6da"/><rect x="5" y="12.5" width="1.6" height="1.6" fill="#d3d6da"/><rect x="1.5" y="15.0" width="1.6" height="1.6" fill="#d3d6da"/><rect x="5" y="17.5" width="1.6" height="1.6" fill="#d3d6da"/><rect x="1.5" y="20.0" width="1.6" height="1.6" fill="#d3d6da"/><rect x="5" y="22.5" width="1.6" height="1.6" fill="#d3d6da"/><rect x="1.5" y="25.0" width="1.6" height="1.6" fill="#d3d6da"/><rect x="5" y="27.5" width="1.6" height="1.6" fill="#d3d6da"/><rect x="1.5" y="30.0" width="1.6" height="1.6" fill="#d3d6da"/><rect x="5" y="32.5" width="1.6" height="1.6" fill="#d3d6da"/><rect x="1.5" y="35.0" width="1.6" height="1.6" fill="#d3d6da"/></svg>
<svg style="left:33px;top:43px" width="25" height="24" viewBox="0 0 25 24"><path d="M9,8 L15,13 M11,19 H13 L15,14" stroke="#888" stroke-width="1.3" fill="none"/><rect x="1.5" y="4.5" width="8.5" height="7" fill="#e6e6e6" stroke="#888" stroke-width="1.1"/><path d="M1,1 Q5,0.5 7,4.5 L1.5,6 Z" fill="#f2e06a"/><circle cx="3.5" cy="3.5" r="2.6" fill="#f6e37a"/><rect x="15" y="5" width="9" height="9" fill="#e9e9e9" stroke="#888" stroke-width="1.1"/><rect x="14.5" y="4.5" width="10" height="2" fill="#3d6fae"/><rect x="2.5" y="15" width="9" height="8.5" fill="#e9e9e9" stroke="#888" stroke-width="1.1"/><rect x="2" y="14.5" width="10" height="2" fill="#3d6fae"/></svg>
<svg style="left:67px;top:55px" width="7" height="4" viewBox="0 0 7 4"><path d="M0,0 H7 L3.5,4 Z" fill="#111"/></svg>
<svg style="left:85px;top:47px" width="23" height="19" viewBox="0 0 23 19"><path d="M1.5,3.5 Q1.5,1.5 3.5,1.5 H8 L10,3.5 H17.5 Q19,3.5 19,5 V10 H1.5 Z" fill="#fffdf6" stroke="#dcb46a" stroke-width="1"/><path d="M0.5,17.5 Q0.5,18.5 2,18.5 H17.5 Q19,18.5 19.5,17 L22.5,8.5 Q23,7.5 21.5,7.5 H5 Q4,7.5 3.5,8.5 Z" fill="#f0b652"/></svg>
<svg style="left:122px;top:46px" width="22" height="22" viewBox="0 0 22 22"><path d="M0,1 Q0,0 1,0 H21 Q22,0 22,1 V21 Q22,22 21,22 H1 L0,21 Z" fill="#6b3aa2"/><rect x="3" y="0.8" width="16" height="12" fill="#fff"/><rect x="4" y="14" width="13" height="6.8" fill="#fff"/><rect x="7.3" y="16.5" width="2.7" height="4.3" fill="#6b3aa2"/></svg>
<svg style="left:159px;top:45px" width="24" height="23" viewBox="0 0 24 23"><rect x="1" y="0" width="19" height="19" fill="#b7a0d6"/><rect x="2.5" y="1.5" width="18" height="18" fill="#9a7cc4"/><rect x="3.5" y="2.5" width="16" height="2" fill="#d8cdea"/><g transform="translate(4.5,4.5) scale(0.84)"><path d="M0,1 Q0,0 1,0 H21 Q22,0 22,1 V21 Q22,22 21,22 H1 L0,21 Z" fill="#6b3aa2"/><rect x="3" y="0.8" width="16" height="12" fill="#fff"/><rect x="4" y="14" width="13" height="6.8" fill="#fff"/><rect x="7.3" y="16.5" width="2.7" height="4.3" fill="#6b3aa2"/></g></svg>
<div class="a" style="left:193px;top:41px;width:1px;height:30px;background:#d5d8dc"></div>
<svg style="left:205px;top:44px" width="23" height="24" viewBox="0 0 23 24"><path d="M3.5,0.5 L16.5,16 M19.5,0.5 L6.5,16" stroke="#555" stroke-width="2.6" stroke-linecap="round"/><circle cx="5" cy="19" r="3.6" fill="none" stroke="#4a7fc1" stroke-width="1.7"/><circle cx="18" cy="19" r="3.6" fill="none" stroke="#4a7fc1" stroke-width="1.7"/></svg>
<svg style="left:242px;top:44px" width="23" height="24" viewBox="0 0 23 24"><path d="M1.5,1.5 H9.5 L13.0,5 V15.5 H1.5 Z" fill="#fff" stroke="#888" stroke-width="1"/><rect x="4" y="6.0" width="6.5" height="1.6" fill="#3f7fcf"/><rect x="4" y="9.2" width="6.5" height="1.6" fill="#3f7fcf"/><rect x="4" y="12.4" width="6.5" height="1.6" fill="#3f7fcf"/><path d="M10.0,8.5 H18.0 L21.5,12 V23.0 H10.0 Z" fill="#fff" stroke="#888" stroke-width="1"/><rect x="12.5" y="13.0" width="6.5" height="1.6" fill="#3f7fcf"/><rect x="12.5" y="16.2" width="6.5" height="1.6" fill="#3f7fcf"/><rect x="12.5" y="19.4" width="6.5" height="1.6" fill="#3f7fcf"/></svg>
<svg style="left:280px;top:44px" width="23" height="24" viewBox="0 0 23 24"><rect x="1" y="3" width="17" height="18" fill="#dcdcdc"/><rect x="5" y="1" width="9" height="4" fill="#c8c8c8"/><path d="M10.5,9.5 H19 L22.5,13 V23.5 H10.5 Z" fill="#fff" stroke="#cfcfcf"/></svg>
<div class="a" style="left:313px;top:42px;width:1px;height:29px;background:#d5d8dc"></div>
<svg style="left:323.5px;top:47.7px" width="24" height="14" viewBox="0 0 24 14"><path d="M0.5,2.5 V13.5 H11.5 L7.5,9.5 Q12,4.5 17,5.5 Q21,6.5 23.5,9.5 Q21,1.5 14,0.5 Q8,0 4.5,5.5 Z" fill="#3b79c1"/></svg>
<svg style="left:362.4px;top:47.7px" width="24" height="14" viewBox="0 0 24 14"><g transform="translate(24,0) scale(-1,1)"><path d="M0.5,2.5 V13.5 H11.5 L7.5,9.5 Q12,4.5 17,5.5 Q21,6.5 23.5,9.5 Q21,1.5 14,0.5 Q8,0 4.5,5.5 Z" fill="#c4c4c4"/></g></svg>
<div class="a" style="left:396px;top:41px;width:1px;height:30px;background:#d5d8dc"></div>
<span class="t" style="left:407px;top:47px;font-family:'Liberation Serif';font-weight:bold;font-style:italic;font-size:20px;color:#4a4a4a;letter-spacing:-0.5px">Aa</span>
<div class="a" style="left:441px;top:41px;width:1px;height:30px;background:#d5d8dc"></div>
<svg style="left:451px;top:46px" width="25" height="22" viewBox="0 0 25 22"><rect x="1.0" y="1.0" width="21" height="19" fill="#fff" stroke="#888" stroke-width="1.2"/><rect x="0.5" y="0.5" width="22" height="4.5" fill="#2f66a8"/><path d="M13,15.5 L16,19.5 L23.5,11.5" stroke="#3a8a5c" stroke-width="2.6" fill="none"/></svg>
<svg style="left:488px;top:45px" width="26" height="23" viewBox="0 0 26 23"><rect x="1.3" y="1.5" width="9.5" height="7.5" fill="#fff" stroke="#777" stroke-width="1.2"/><rect x="0.8" y="1" width="10.5" height="2" fill="#3568a8"/><rect x="14.5" y="3.0" width="8.5" height="6" fill="#fff" stroke="#888" stroke-width="1.2"/><rect x="14" y="2.5" width="9.5" height="2" fill="#3568a8"/><rect x="2.5" y="13.0" width="8.5" height="7.5" fill="#fff" stroke="#777" stroke-width="1.2"/><rect x="2" y="12.5" width="9.5" height="2" fill="#3568a8"/><path d="M12.5,6.5 L25,13.5 L12.5,20.5 Z" fill="#22b022"/></svg>
<div class="a" style="left:523px;top:41px;width:1px;height:30px;background:#d5d8dc"></div>
<svg style="left:536px;top:44px" width="24" height="25" viewBox="0 0 24 25"><path d="M0.5,3.5 Q0.5,0 8,0 Q15.5,0 15.5,3.5 V20 Q15.5,23.5 8,23.5 Q0.5,23.5 0.5,20 Z" fill="#f4c46d"/><path d="M0.5,4 Q8,7.5 15.5,4" stroke="#e0a94d" fill="none"/><rect x="10.5" y="15.5" width="12" height="9" fill="#fff" stroke="#888" stroke-width="1.3"/><rect x="13" y="18.5" width="7" height="1.2" fill="#aaa"/><rect x="13" y="21" width="7" height="1.2" fill="#aaa"/><path d="M9,15 L11,17 L14.5,12.5" stroke="#3a8a5c" stroke-width="1.6" fill="none"/></svg>
<svg style="left:572px;top:44px" width="25" height="25" viewBox="0 0 25 25"><path d="M0.5,9 Q0.5,6 6,6 Q11.5,6 11.5,9 V21 Q11.5,24 6,24 Q0.5,24 0.5,21 Z" fill="#f4c46d"/><path d="M7,0 V7 M3.5,4 L7,8 L10.5,4" stroke="#3a74c0" stroke-width="2" fill="none"/><path d="M12,8.5 L24,15 L12,21.5 Z" fill="#22b022"/></svg>
<svg style="left:610px;top:44px" width="24" height="24" viewBox="0 0 24 24"><circle cx="11.7" cy="12" r="11.7" fill="#2b64a6"/><path d="M7.8,9 Q7.8,4.8 11.8,4.8 Q15.8,4.8 15.8,8.6 Q15.8,10.8 13.2,12.2 Q12,13 12,15" stroke="#fff" stroke-width="2.8" fill="none"/><circle cx="12" cy="18.8" r="1.8" fill="#fff"/></svg>
<svg style="left:648px;top:67px" width="8" height="7" viewBox="0 0 8 7"><rect x="0.5" y="0" width="7" height="1.3" fill="#111"/><path d="M0.5,2 H7.5 L4,6.5 Z" fill="#111"/></svg>
<svg style="left:1663px;top:40px" width="8" height="32" viewBox="0 0 8 32"><rect x="1.5" y="0" width="1.6" height="1.6" fill="#d3d6da"/><rect x="5" y="2.5" width="1.6" height="1.6" fill="#d3d6da"/><rect x="1.5" y="5.0" width="1.6" height="1.6" fill="#d3d6da"/><rect x="5" y="7.5" width="1.6" height="1.6" fill="#d3d6da"/><rect x="1.5" y="10.0" width="1.6" height="1.6" fill="#d3d6da"/><rect x="5" y="12.5" width="1.6" height="1.6" fill="#d3d6da"/><rect x="1.5" y="15.0" width="1.6" height="1.6" fill="#d3d6da"/><rect x="5" y="17.5" width="1.6" height="1.6" fill="#d3d6da"/><rect x="1.5" y="20.0" width="1.6" height="1.6" fill="#d3d6da"/><rect x="5" y="22.5" width="1.6" height="1.6" fill="#d3d6da"/><rect x="1.5" y="25.0" width="1.6" height="1.6" fill="#d3d6da"/><rect x="5" y="27.5" width="1.6" height="1.6" fill="#d3d6da"/><rect x="1.5" y="30.0" width="1.6" height="1.6" fill="#d3d6da"/></svg>
<svg style="left:1734px;top:46px" width="20" height="20" viewBox="0 0 20 20"><path d="M2,18 L17,3" stroke="#2c9a2c" stroke-width="3.2" stroke-linecap="round"/><path d="M6,9.5 L11,14.5" stroke="#2ea52e" stroke-width="7" stroke-linecap="round"/><path d="M7.5,9 L10.5,12" stroke="#5fd35f" stroke-width="2" stroke-linecap="round"/></svg>
<svg style="left:1904.5px;top:65px" width="8" height="7" viewBox="0 0 8 7"><rect x="0.5" y="0" width="7" height="1.3" fill="#111"/><path d="M0.5,2 H7.5 L4,6.5 Z" fill="#111"/></svg>
<div class="a" style="left:1919px;top:0;width:1px;height:980px;background:#d0d3d7"></div>
<svg style="left:254.8px;top:107px" width="9" height="6" viewBox="0 0 9 6"><path d="M0,0 H9 L4.5,6 Z" fill="#111"/></svg>
<svg style="left:272.3px;top:104px" width="9" height="11" viewBox="0 0 9 11"><rect x="1.2" y="0.8" width="5.6" height="6.2" fill="#fff" stroke="#111" stroke-width="1.6"/><rect x="5" y="1" width="2" height="6" fill="#111"/><rect x="0" y="6.5" width="9" height="1.5" fill="#111"/><rect x="3.8" y="8" width="1.4" height="3" fill="#222"/></svg>
<svg style="left:289.8px;top:105.3px" width="10" height="10" viewBox="0 0 10 10"><path d="M1,1 L9,9 M9,1 L1,9" stroke="#222" stroke-width="2.4" stroke-linecap="round"/></svg>
<svg style="left:1513.7px;top:108.8px" width="9" height="5" viewBox="0 0 9 5"><path d="M0,0 H9 L4.5,5 Z" fill="#111"/></svg>
<svg style="left:1531px;top:104px" width="10" height="10" viewBox="0 0 10 10"><path d="M1,1 L9,9 M9,1 L1,9" stroke="#222" stroke-width="2.4" stroke-linecap="round"/></svg>
<svg style="left:1861px;top:107.2px" width="9" height="5.7" viewBox="0 0 9 5.7"><path d="M0,0 H9 L4.5,5.7 Z" fill="#111"/></svg>
<svg style="left:1878.5px;top:104px" width="9" height="11" viewBox="0 0 9 11"><rect x="1.2" y="0.8" width="5.6" height="6.2" fill="#fff" stroke="#111" stroke-width="1.6"/><rect x="5" y="1" width="2" height="6" fill="#111"/><rect x="0" y="6.5" width="9" height="1.5" fill="#111"/><rect x="3.8" y="8" width="1.4" height="3" fill="#222"/></svg>
<svg style="left:1896.1px;top:105px" width="10" height="10" viewBox="0 0 10 10"><path d="M1,1 L9,9 M9,1 L1,9" stroke="#222" stroke-width="2.4" stroke-linecap="round"/></svg>
<svg style="left:262px;top:140px" width="22" height="22" viewBox="0 0 22 22"><circle cx="8.6" cy="8.6" r="7.2" fill="none" stroke="#d9d9d9" stroke-width="2.4"/><path d="M4.5,7 Q5.5,4.5 8,4" stroke="#e6e6e6" stroke-width="1.2" fill="none"/><path d="M14.2,14.2 L20,20" stroke="#d3d3d3" stroke-width="3.6" stroke-linecap="round"/></svg>
<svg style="left:1561px;top:196px" width="22" height="22" viewBox="0 0 22 22"><circle cx="8.6" cy="8.6" r="7.2" fill="none" stroke="#d9d9d9" stroke-width="2.4"/><path d="M4.5,7 Q5.5,4.5 8,4" stroke="#e6e6e6" stroke-width="1.2" fill="none"/><path d="M14.2,14.2 L20,20" stroke="#d3d3d3" stroke-width="3.6" stroke-linecap="round"/></svg>
<svg style="left:326px;top:145.4px" width="24" height="14" viewBox="0 0 24 14"><path d="M0.5,2.5 V13.5 H11.5 L7.5,9.5 Q12,4.5 17,5.5 Q21,6.5 23.5,9.5 Q21,1.5 14,0.5 Q8,0 4.5,5.5 Z" fill="#3b79c1"/></svg>
<svg style="left:359.8px;top:152px" width="6.7" height="4.7" viewBox="0 0 6.7 4.7"><path d="M0,0 H6.7 L3.35,4.7 Z" fill="#111"/></svg>
<svg style="left:377.4px;top:145.4px" width="24" height="14" viewBox="0 0 24 14"><g transform="translate(24,0) scale(-1,1)"><path d="M0.5,2.5 V13.5 H11.5 L7.5,9.5 Q12,4.5 17,5.5 Q21,6.5 23.5,9.5 Q21,1.5 14,0.5 Q8,0 4.5,5.5 Z" fill="#c4c4c4"/></g></svg>
<svg style="left:409.8px;top:152px" width="6.7" height="4.7" viewBox="0 0 6.7 4.7"><path d="M0,0 H6.7 L3.35,4.7 Z" fill="#aaa"/></svg>
<div class="a" style="left:423px;top:139px;width:1px;height:29px;background:#d5d8dc"></div>
<svg style="left:434px;top:141.5px" width="25" height="25" viewBox="0 0 25 25"><rect x="0.6" y="0.6" width="23.5" height="23.6" fill="#fff" stroke="#666" stroke-width="1.2"/><rect x="0" y="0" width="24.7" height="2.5" fill="#3a74b8"/><rect x="6.5" y="2.5" width="1.2" height="22" fill="#666"/><rect x="9" y="4.5" width="7" height="8" fill="#ddd" stroke="#999" stroke-width="0.8"/><rect x="9" y="4.5" width="7" height="2.5" fill="#3a74b8"/><rect x="15.5" y="14" width="7.5" height="9" fill="#ddd" stroke="#999" stroke-width="0.8"/><rect x="15.5" y="14" width="7.5" height="2.5" fill="#3a74b8"/><path d="M8,13 H15.5 V14" stroke="#666" fill="none" stroke-width="0.8"/></svg>
<svg style="left:565px;top:152.7px" width="6.5" height="4" viewBox="0 0 6.5 4"><path d="M0,0 H6.5 L3.25,4 Z" fill="#111"/></svg>
<div class="a" style="left:580px;top:139px;width:1px;height:29px;background:#d5d8dc"></div>
<svg style="left:592.5px;top:143px" width="30" height="29" viewBox="0 0 30 29"><rect x="0" y="0" width="29.5" height="29" fill="#6aa0d8"/><rect x="3" y="2.5" width="23.5" height="9.5" fill="#fff" opacity="0.85"/><rect x="3" y="13" width="23.5" height="1.2" fill="#fff"/><path d="M14.7,15.5 V26 M11.5,18.5 L14.7,15.2 L18,18.5 M11.5,23 L14.7,26.3 L18,23" stroke="#fff" stroke-width="2" fill="none"/></svg>
<svg style="left:629px;top:141px" width="25" height="25" viewBox="0 0 25 25"><rect x="0.6" y="0.6" width="5.5" height="5.5" fill="#fff" stroke="#666" stroke-width="1.1"/><rect x="1.8" y="3" width="3.2" height="1" fill="#333"/><rect x="7" y="3" width="18" height="1.4" fill="#3a74b8"/><rect x="8.5" y="12" width="16" height="1.2" fill="#999"/><rect x="8.5" y="21.5" width="16" height="1.2" fill="#999"/></svg>
<svg style="left:666px;top:141px" width="25" height="25" viewBox="0 0 25 25"><rect x="0.6" y="1.0" width="6.5" height="6.5" fill="#fff" stroke="#666" stroke-width="1.1"/><path d="M2,4.3 H5.8 M3.9,2.4 V6.2" stroke="#333" stroke-width="0.9"/><rect x="9" y="3.5" width="16" height="2" fill="#7aa0c8"/><rect x="0.6" y="9.5" width="6.5" height="6.5" fill="#fff" stroke="#666" stroke-width="1.1"/><path d="M2,12.8 H5.8 M3.9,10.9 V14.7" stroke="#333" stroke-width="0.9"/><rect x="9" y="12.0" width="16" height="2" fill="#7aa0c8"/><rect x="0.6" y="18.0" width="6.5" height="6.5" fill="#fff" stroke="#666" stroke-width="1.1"/><path d="M2,21.3 H5.8 M3.9,19.4 V23.2" stroke="#333" stroke-width="0.9"/><rect x="9" y="20.5" width="16" height="2" fill="#7aa0c8"/></svg>
<div class="a" style="left:700px;top:139px;width:1px;height:29px;background:#d5d8dc"></div>
<svg style="left:711px;top:141px" width="25" height="25" viewBox="0 0 25 25"><path d="M2.5,3 L21,21.5" stroke="#3a74b8" stroke-width="2"/><path d="M1,1 V7.5 L5.5,3.5 Z" fill="#3a74b8"/><path d="M24.5,24.5 L17.5,23.5 L23.5,17.5 Z" fill="#3a74b8"/></svg>
<svg style="left:749px;top:141px" width="25" height="25" viewBox="0 0 25 25"><rect x="0.6" y="0.6" width="23.5" height="23.6" fill="#fff" stroke="#777" stroke-width="1.2"/><rect x="0" y="0" width="24.7" height="2.5" fill="#3a74b8"/><text x="2" y="10.5" font-family="Liberation Sans" font-size="6.3" fill="#888" letter-spacing="-0.2">01001</text><text x="2.5" y="20" font-family="Liberation Sans" font-size="6.3" fill="#888">1 0</text><rect x="14" y="13.5" width="9.5" height="10" fill="#fff" stroke="#777" stroke-width="1"/><path d="M15.5,19 L18,21.5 L22.5,15.5" stroke="#3a74b8" stroke-width="1.8" fill="none"/></svg>
<svg style="left:787px;top:141px" width="23" height="25" viewBox="0 0 23 25"><path d="M11.5,0.5 Q17,3.5 23,3.5 V12 Q23,20 11.5,24.5 Q0,20 0,12 V3.5 Q6,3.5 11.5,0.5 Z" fill="#2a9df0"/><path d="M7,12.5 L10.5,16 L16.5,9.5" stroke="#fff" stroke-width="2.2" fill="none"/></svg>
<svg style="left:824px;top:141px" width="25" height="25" viewBox="0 0 25 25"><rect x="0.6" y="0.6" width="23.5" height="23.6" fill="#fff" stroke="#777" stroke-width="1.2"/><rect x="0" y="0" width="24.7" height="2.5" fill="#3a74b8"/><rect x="3" y="6" width="9" height="7" fill="#ccc" stroke="#888" stroke-width="0.8"/><rect x="3" y="6" width="9" height="2" fill="#3a74b8"/><rect x="3" y="15.5" width="8" height="6.5" fill="#ccc" stroke="#888" stroke-width="0.8"/><rect x="3" y="15.5" width="8" height="2" fill="#3a74b8"/><circle cx="18" cy="18" r="4.5" fill="#ddd" stroke="#999" stroke-width="1"/><path d="M12,8 H20 V12" stroke="#3a9a3a" stroke-width="1.2" fill="none"/></svg>
<svg style="left:1528.5px;top:189px" width="10" height="7" viewBox="0 0 10 7"><path d="M1,6 L5,1.5 L9,6" stroke="#555" stroke-width="2" fill="none"/></svg>
<svg style="left:1528.5px;top:925px" width="10" height="8" viewBox="0 0 10 8"><path d="M1,1.5 L5,6 L9,1.5" stroke="#555" stroke-width="2" fill="none"/></svg>
<svg style="left:1566px;top:146.5px" width="24" height="22" viewBox="0 0 24 22"><rect x="1.0" y="1.0" width="21" height="19" fill="#fff" stroke="#8a8a8a" stroke-width="1.2"/><rect x="0.5" y="0.5" width="22" height="4" fill="#2f66a8"/><rect x="13.5" y="12.3" width="10" height="9.5" rx="1" fill="#e2622b"/><path d="M16,14.8 L21,19.5 M21,14.8 L16,19.5" stroke="#fff" stroke-width="1.8"/></svg>
<svg style="left:1604px;top:145.8px" width="22" height="22" viewBox="0 0 22 22"><path d="M5,0 V8 M1.5,5 L5,9 L8.5,5 M17,0 V8 M13.5,5 L17,9 L20.5,5" stroke="#2f6cb0" stroke-width="2.2" fill="none"/><rect x="0.6" y="12.9" width="21" height="8.5" fill="#fff" stroke="#777" stroke-width="1.2"/><path d="M1,15.5 H21 M1,18.5 H21" stroke="#999" stroke-width="1" stroke-dasharray="1.5,2"/></svg>
<svg style="left:1640px;top:146.5px" width="24" height="22" viewBox="0 0 24 22"><rect x="1.0" y="1.0" width="21" height="19" fill="#fff" stroke="#8a8a8a" stroke-width="1.2"/><rect x="0.5" y="0.5" width="22" height="4" fill="#2f66a8"/><path d="M11,15.5 L14.5,19.5 L23,10.5" stroke="#3a8a5c" stroke-width="2.6" fill="none"/></svg>
<svg style="left:1678.5px;top:146px" width="24" height="20" viewBox="0 0 24 20"><path d="M3.5,10 A8.5,8.5 0 0 1 19,6" stroke="#3cbf3c" stroke-width="2.6" fill="none"/><path d="M15,6.5 L22,3 L21.5,11 Z" fill="#3cbf3c"/><path d="M20.5,10 A8.5,8.5 0 0 1 5,14" stroke="#3cbf3c" stroke-width="2.6" fill="none"/><path d="M9,13.5 L2,17 L2.5,9 Z" fill="#3cbf3c"/></svg>
<svg style="left:1715.2px;top:144.1px" width="25" height="25" viewBox="0 0 25 25"><rect x="0.6" y="0.6" width="23.5" height="23.5" fill="#fff" stroke="#777" stroke-width="1.2"/><rect x="0" y="0" width="24.7" height="2.3" fill="#3a74b8"/><rect x="9" y="2.5" width="1.2" height="22" fill="#999"/><rect x="11.5" y="5.5" width="10.5" height="8.5" fill="#eee" stroke="#888" stroke-width="1"/><rect x="14" y="8" width="6" height="1" fill="#bbb"/><rect x="14" y="11" width="6" height="1" fill="#bbb"/><path d="M2.5,9.5 H7 M5,7 L7.5,9.5 L5,12" stroke="#3a74b8" stroke-width="1.3" fill="none"/></svg>
<svg style="left:1752.7px;top:144.1px" width="25" height="25" viewBox="0 0 25 25"><rect x="0.6" y="0.6" width="23.5" height="23.5" fill="#fff" stroke="#777" stroke-width="1.2"/><rect x="0" y="0" width="24.7" height="2.3" fill="#3a74b8"/><rect x="9" y="2.5" width="1.2" height="22" fill="#999"/><rect x="11.5" y="5.5" width="10.5" height="8.5" fill="#eee" stroke="#888" stroke-width="1"/><rect x="14" y="8" width="6" height="1" fill="#bbb"/><rect x="14" y="11" width="6" height="1" fill="#bbb"/><path d="M1.5,9.5 H8 M3.5,7.5 L1.5,9.5 L3.5,11.5 M6,7.5 L8,9.5 L6,11.5" stroke="#3a74b8" stroke-width="1.2" fill="none"/></svg>
<div class="a" style="left:1787px;top:142px;width:1px;height:26px;background:#c8ccd0"></div>
<svg style="left:1797.4px;top:144.1px" width="25" height="23" viewBox="0 0 25 23"><rect x="5" y="4.5" width="19.5" height="18" fill="#fff" stroke="#d0d0d0" stroke-width="1.5"/><rect x="7" y="13" width="16" height="1.5" fill="#ccc"/><rect x="7" y="7.5" width="16" height="1" fill="#e0e0e0"/><rect x="7" y="10" width="16" height="1" fill="#e0e0e0"/><path d="M0,3 L5,0 L9,4 L6,8 Z" fill="#d0d0d0"/></svg>
<svg style="left:1560px;top:244px" width="11" height="7" viewBox="0 0 11 7"><path d="M1,1 L5.5,5.5 L10,1" stroke="#333" stroke-width="2" fill="none"/></svg>
<svg style="left:1584px;top:271px" width="11" height="7" viewBox="0 0 11 7"><path d="M1,1 L5.5,5.5 L10,1" stroke="#333" stroke-width="2" fill="none"/></svg>
<svg style="left:1581.4px;top:239.3px" width="19" height="17" viewBox="0 0 19 17"><rect x="0.6" y="0.6" width="16.5" height="14" fill="#fff" stroke="#777" stroke-width="1.2"/><rect x="0" y="0" width="17.7" height="3" fill="#3a8ad0"/><rect x="9.5" y="10" width="8.5" height="6" fill="#fff"/><path d="M17.5,13 H11 M13.5,10.5 L11,13 L13.5,15.5" stroke="#2f6cc0" stroke-width="1.5" fill="none"/></svg>
<svg style="left:1607.4px;top:269px" width="13" height="12" viewBox="0 0 13 12"><rect x="0" y="1" width="13" height="10.5" fill="#f8cd3c"/><rect x="0" y="0" width="5.5" height="2" fill="#eab82e"/></svg>
<svg style="left:1607.4px;top:378.4px" width="13" height="12" viewBox="0 0 13 12"><rect x="0" y="1" width="13" height="10.5" fill="#f8cd3c"/><rect x="0" y="0" width="5.5" height="2" fill="#eab82e"/></svg>
<svg style="left:1607.4px;top:406px" width="13" height="12" viewBox="0 0 13 12"><rect x="0" y="1" width="13" height="10.5" fill="#f8cd3c"/><rect x="0" y="0" width="5.5" height="2" fill="#eab82e"/></svg>
<svg style="left:1628.5px;top:293.5px" width="19" height="17" viewBox="0 0 19 17"><path d="M4,4 H16 V10 H8 M8,10 V15 H14" stroke="#999" stroke-width="1" fill="none"/><rect x="0" y="0" width="6" height="5.5" fill="#ef7a2a"/><rect x="7" y="6.5" width="6" height="5.5" fill="#ef7a2a"/><rect x="13" y="12" width="5.5" height="5" fill="#ef7a2a"/></svg>
<svg style="left:1628.5px;top:321.2px" width="19" height="17" viewBox="0 0 19 17"><rect x="0.5" y="0.5" width="6" height="5" fill="#fff" stroke="#667" stroke-width="1"/><rect x="0.5" y="0.5" width="6" height="1.5" fill="#4a7ab8"/><rect x="11" y="3" width="7" height="6" fill="#fff" stroke="#667" stroke-width="1"/><rect x="11" y="3" width="7" height="1.5" fill="#4a7ab8"/><rect x="1" y="10" width="6" height="6" fill="#fff" stroke="#667" stroke-width="1"/><rect x="1" y="10" width="6" height="1.5" fill="#4a7ab8"/><path d="M6.5,3 H11 M4,5.5 V10" stroke="#777" stroke-width="0.8" fill="none"/></svg>
<svg style="left:1629.8px;top:348.2px" width="15" height="18" viewBox="0 0 15 18"><path d="M0.6,0.6 H10 L14.4,5 V17.4 H0.6 Z" fill="#fff" stroke="#777" stroke-width="1.2"/><path d="M10,0.6 V5 H14.4" stroke="#777" fill="none" stroke-width="1"/><rect x="4" y="5" width="3" height="3.5" fill="#3aa048"/><circle cx="10" cy="13" r="1.8" fill="#e03a2a"/></svg>
<svg style="left:725.3px;top:326.7px" width="15" height="19" viewBox="0 0 15 19"><path d="M0.6,0.6 H10 L14.4,5 V18.4 H0.6 Z" fill="#fff" stroke="#8a8a8a" stroke-width="1.2"/><path d="M10,0.6 L14.4,5 H10 Z" fill="#777"/><circle cx="6.5" cy="8" r="1.7" fill="#3a8a8a"/><circle cx="10.8" cy="14.3" r="2.1" fill="#d2541e"/></svg>
<svg style="left:1195.1px;top:333.5px" width="16" height="20" viewBox="0 0 16 20"><path d="M1.5,0 H11 L15.7,4.7 V18 Q15.7,19.2 14.5,19.2 H1.5 Q0,19.2 0,18 V1.5 Q0,0 1.5,0 Z" fill="#5ea3dc"/><path d="M11,0.5 V4.7 H15.3 Z" fill="#fff"/><path d="M6.3,9.5 H9.2 V13 Q9.2,16 6.5,17.5 L6,16.7 Q7.6,15.5 7.5,13.8 H6.3 Z" fill="#fff"/></svg>
<svg style="left:369px;top:355.5px" width="16" height="22" viewBox="0 0 16 22"><path d="M4.5,12 L9.5,9 L15,12 V18 L9.5,21 L4.5,18 Z" fill="#f6c22e"/><path d="M4.5,12 L9.5,15 L15,12 M9.5,15 V21" stroke="#e8a417" stroke-width="0.8" fill="none"/><path d="M0.5,1.5 Q6,0 9.5,5.5" stroke="#3cb043" stroke-width="1.8" fill="none"/><path d="M6.5,4 L12,3 L10.5,8.5 Z" fill="#3cb043"/></svg>
</body></html>
